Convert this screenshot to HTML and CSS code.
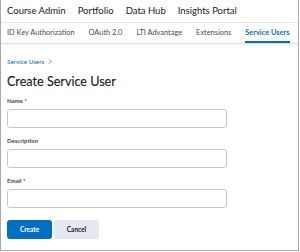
FILE: index.html
```html
<!DOCTYPE html>
<html>
<head>
<meta charset="utf-8">
<link rel="stylesheet" href="styles.css">
</head>
<body>
<div class="frame">
  <nav class="topnav">
    <span>Course Admin</span>
    <span>Portfolio</span>
    <span>Data Hub</span>
    <span>Insights Portal</span>
  </nav>
  <div class="tabs">
    <span class="tab">ID Key Authorization</span>
    <span class="tab">OAuth 2.0</span>
    <span class="tab">LTI Advantage</span>
    <span class="tab">Extensions</span>
    <span class="tab active">Service Users</span>
  </div>
  <main class="content">
    <div class="crumb"><span class="crumb-link">Service Users</span><svg class="chev" width="4" height="5" viewBox="0 0 4 5"><path d="M1 0.5 L3 2.5 L1 4.5" fill="none" stroke="#6e7376" stroke-width="0.9"/></svg></div>
    <h1 class="title">Create Service User</h1>
    <form class="form">
      <label class="field">
        <span class="label">Name *</span>
        <input class="input" type="text">
      </label>
      <label class="field">
        <span class="label">Description</span>
        <input class="input" type="text">
      </label>
      <label class="field">
        <span class="label">Email *</span>
        <input class="input" type="text">
      </label>
      <div class="actions">
        <button type="button" class="btn primary">Create</button>
        <button type="button" class="btn secondary">Cancel</button>
      </div>
    </form>
  </main>
</div>
</body>
</html>
```

FILE: styles.css
```css
* { box-sizing: border-box; }
html, body { margin: 0; padding: 0; background: #fff; }
body { font-family: Lato, "Open Sans", sans-serif; color: #202122; }
.frame {
  width: 299px;
  height: 251px;
  border-left: 1px solid #a9a9a9;
  border-right: 1px solid #a9a9a9;
  border-bottom: 1px solid #a9a9a9;
  overflow: hidden;
}
.topnav {
  display: flex;
  gap: 12px;
  height: 23px;
  align-items: center;
  padding: 0 0 1px 6px;
  font-size: 9.5px;
  border-bottom: 1px solid #e3e6e9;
}
.tabs {
  display: flex;
  gap: 14px;
  height: 21px;
  padding-left: 6px;
  font-size: 7.4px;
  border-bottom: 1px solid #dfe3e6;
  box-shadow: 0 1px 1px rgba(0,0,0,0.04);
}
.tab {
  display: flex;
  align-items: center;
  color: #494c4e;
  border-bottom: 2px solid transparent;
  padding-top: 1px;
}
.tab.active {
  color: #006fbf;
  font-weight: 700;
  border-bottom-color: #006fbf;
}
.content { padding: 12px 0 0 6px; }
.crumb {
  display: flex;
  align-items: center;
  gap: 4px;
  font-size: 6.3px;
  height: 10px;
}
.crumb-link { color: #006fbf; }
.chev { display: block; }
.title {
  margin: 7px 0 0;
  font-size: 12.6px;
  font-weight: 400;
  color: #1c1d1e;
  line-height: 18px;
  -webkit-text-stroke: 0.15px #1c1d1e;
}
.form { display: flex; flex-direction: column; margin-top: 5px; }
.field { display: flex; flex-direction: column; margin-bottom: 8px; }
.label {
  font-size: 6px;
  font-weight: 700;
  color: #494c4e;
  line-height: 10px;
  margin-bottom: 3px;
}
.input {
  width: 220px;
  height: 19px;
  border: 1px solid #c5c8cb;
  border-radius: 3px;
  margin: 0;
  background: #fff;
}
.actions { display: flex; gap: 2px; margin-top: 4px; }
.btn {
  width: 45px;
  height: 19px;
  border: none;
  border-radius: 3px;
  font-family: Lato, sans-serif;
  font-size: 6.5px;
  font-weight: 700;
  padding: 0;
}
.btn.primary { background: #006fbf; color: #fff; }
.btn.secondary { background: #e3e9f1; color: #202122; }
```
